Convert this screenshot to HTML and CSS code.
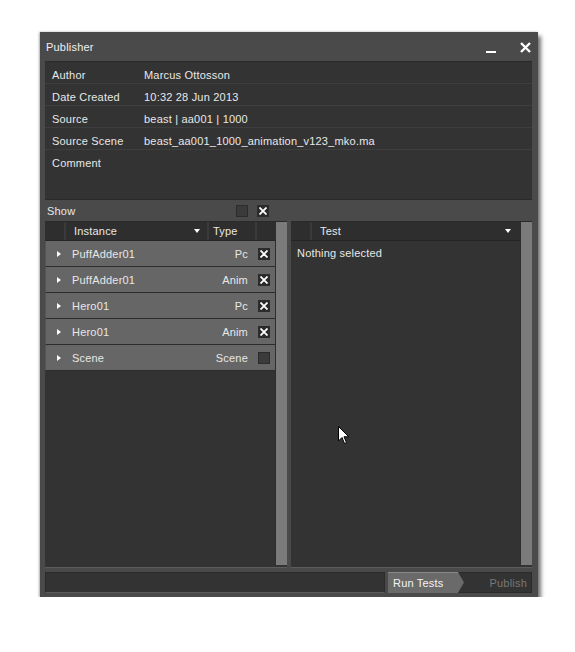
FILE: index.html
```html
<!DOCTYPE html>
<html lang="en">
<head>
  <meta charset="UTF-8">
  <title>Publisher</title>
  <link rel="stylesheet" href="styles.css">
</head>
<body>

  <div class="window">
    <div class="titlebar">
      <span class="title">Publisher</span>
      <span class="minimize"></span>
      <svg class="close" width="11" height="11" viewBox="0 0 11 11"><path d="M1 1 L10 10 M10 1 L1 10" stroke="#fff" stroke-width="2.4"/></svg>
    </div>

    <div class="info">
      <div class="info-row"><span class="label">Author</span><span>Marcus Ottosson</span></div>
      <div class="info-row"><span class="label">Date Created</span><span>10:32 28 Jun 2013</span></div>
      <div class="info-row"><span class="label">Source</span><span>beast | aa001 | 1000</span></div>
      <div class="info-row"><span class="label">Source Scene</span><span>beast_aa001_1000_animation_v123_mko.ma</span></div>
      <div class="info-row comment"><span class="label">Comment</span></div>
    </div>

    <div class="show-bar">
      <span>Show</span>
      <span class="checks">
        <span class="check"></span>
        <span class="check on"><svg width="8" height="8" viewBox="0 0 8 8"><path d="M0.5 0.5 L7.5 7.5 M7.5 0.5 L0.5 7.5" stroke="#fff" stroke-width="1.8"/></svg></span>
      </span>
    </div>

    <div class="panels">
      <div class="panel left">
        <div class="list">
          <div class="head">
            <span class="cell first"></span>
            <span class="cell instance">Instance <svg class="arrow" width="6" height="4" viewBox="0 0 6 4"><path d="M0 0 L6 0 L3 4 Z" fill="#fff"/></svg></span>
            <span class="cell type">Type</span>
            <span class="cell last"></span>
          </div>
          <div class="item"><svg class="tri" width="4" height="6" viewBox="0 0 4 6"><path d="M0 0 L4 3 L0 6 Z" fill="#fff"/></svg><span class="name">PuffAdder01</span><span class="kind">Pc</span><span class="check on"><svg width="8" height="8" viewBox="0 0 8 8"><path d="M0.5 0.5 L7.5 7.5 M7.5 0.5 L0.5 7.5" stroke="#fff" stroke-width="1.8"/></svg></span></div>
          <div class="item"><svg class="tri" width="4" height="6" viewBox="0 0 4 6"><path d="M0 0 L4 3 L0 6 Z" fill="#fff"/></svg><span class="name">PuffAdder01</span><span class="kind">Anim</span><span class="check on"><svg width="8" height="8" viewBox="0 0 8 8"><path d="M0.5 0.5 L7.5 7.5 M7.5 0.5 L0.5 7.5" stroke="#fff" stroke-width="1.8"/></svg></span></div>
          <div class="item"><svg class="tri" width="4" height="6" viewBox="0 0 4 6"><path d="M0 0 L4 3 L0 6 Z" fill="#fff"/></svg><span class="name">Hero01</span><span class="kind">Pc</span><span class="check on"><svg width="8" height="8" viewBox="0 0 8 8"><path d="M0.5 0.5 L7.5 7.5 M7.5 0.5 L0.5 7.5" stroke="#fff" stroke-width="1.8"/></svg></span></div>
          <div class="item"><svg class="tri" width="4" height="6" viewBox="0 0 4 6"><path d="M0 0 L4 3 L0 6 Z" fill="#fff"/></svg><span class="name">Hero01</span><span class="kind">Anim</span><span class="check on"><svg width="8" height="8" viewBox="0 0 8 8"><path d="M0.5 0.5 L7.5 7.5 M7.5 0.5 L0.5 7.5" stroke="#fff" stroke-width="1.8"/></svg></span></div>
          <div class="item"><svg class="tri" width="4" height="6" viewBox="0 0 4 6"><path d="M0 0 L4 3 L0 6 Z" fill="#fff"/></svg><span class="name">Scene</span><span class="kind">Scene</span><span class="check"></span></div>
        </div>
        <div class="scrollbar"></div>
      </div>

      <div class="panel right">
        <div class="list">
          <div class="head">
            <span class="cell first"></span>
            <span class="cell test">Test <svg class="arrow" width="6" height="4" viewBox="0 0 6 4"><path d="M0 0 L6 0 L3 4 Z" fill="#fff"/></svg></span>
          </div>
          <div class="empty">Nothing selected</div>
        </div>
        <div class="scrollbar"></div>
      </div>
    </div>

    <div class="bottom">
      <div class="status"></div>
      <div class="run">Run Tests</div>
      <div class="publish">Publish</div>
    </div>
  </div>

  <svg class="cursor" width="12" height="19" viewBox="0 0 12 19">
    <path d="M0.5 0.5 L0.5 15 L4 11.5 L6.5 17.5 L8.5 16.5 L6 10.8 L10.8 10.8 Z" fill="#fff" stroke="#000" stroke-width="1"/>
  </svg>

</body>
</html>
```

FILE: styles.css
```css
body {
  margin: 0;
  background: #fff;
  font-family: 'Liberation Sans', Arial, sans-serif;
  font-size: 11px;
  letter-spacing: 0.2px;
  color: #e8e8e8;
}

.window {
  margin: 32px 0 0 40px;
  width: 498px;
  height: 565px;
  background: #4a4a4a;
  box-shadow: 3px 4px 4px rgba(0, 0, 0, 0.55), -1px 0 2px rgba(0, 0, 0, 0.3);
  display: flex;
  flex-direction: column;
  box-sizing: border-box;
  padding: 0 6px 4px 5px;
}

.titlebar {
  height: 29px;
  display: flex;
  align-items: center;
  padding-left: 1px;
  padding-top: 1px;
  box-sizing: border-box;
}

.title {
  flex: 1;
  color: #f0f0f0;
}

.minimize {
  width: 10px;
  height: 2px;
  background: #fff;
  margin: 9px 24px 0 0;
}

.close {
  margin-right: 1px;
}

.info {
  background: #333;
  border-top: 1px solid #2a2a2a;
}

.info-row {
  display: flex;
  align-items: center;
  border-bottom: 1px solid #3e3e3e;
  padding: 4px 0 0 7px;
  height: 17px;
}

.info-row .label {
  width: 92px;
}

.info-row.comment {
  height: 42px;
  align-items: flex-start;
  padding-top: 7px;
  border-bottom: none;
}

.show-bar {
  height: 22px;
  display: flex;
  align-items: center;
  padding-left: 2px;
  box-sizing: border-box;
  border-top: 1px solid #2a2a2a;
}

.show-bar > span:first-child {
  flex: 1;
}

.checks {
  display: flex;
  gap: 9px;
  margin-right: 263px;
}

.check {
  width: 12px;
  height: 12px;
  box-sizing: border-box;
  background: #3b3b3b;
  border: 1px solid #2c2c2c;
  display: flex;
  align-items: center;
  justify-content: center;
}

.check.on {
  background: #2a2a2a;
}

.panels {
  flex: 1;
  display: flex;
  gap: 4px;
}

.panel {
  display: flex;
  background: #333;
  border-top: 1px solid #2a2a2a;
  border-bottom: 1px solid #5c5c5c;
}

.panel.left {
  width: 242px;
}

.panel.right {
  flex: 1;
}

.list {
  flex: 1;
  display: flex;
  flex-direction: column;
}

.scrollbar {
  width: 11px;
  background: #7b7b7b;
  border-left: 1px solid #2e2e2e;
  margin-bottom: 2px;
}

.head {
  height: 18px;
  display: flex;
  background: #2e2e2e;
  border-bottom: 1px solid #262626;
}

.cell {
  display: flex;
  align-items: center;
  border-right: 2px solid #3a3a3a;
}

.cell.first {
  width: 19px;
}

.cell.instance {
  width: 126px;
  padding-left: 8px;
  justify-content: space-between;
  padding-right: 7px;
}

.cell.type {
  width: 42px;
  padding-left: 4px;
}

.cell.last {
  flex: 1;
  border-right: none;
}

.cell.test {
  flex: 1;
  padding-left: 8px;
  padding-right: 9px;
  justify-content: space-between;
  border-right: none;
}

.item {
  height: 25px;
  display: flex;
  align-items: center;
  background: #666;
  border-bottom: 1px solid #2c2c2c;
  border-left: 1px solid #555;
  padding-left: 11px;
}

.tri {
  margin-right: 11px;
}

.name {
  flex: 1;
  padding-top: 1px;
}

.kind {
  margin-right: 10px;
}

.item .check {
  margin-right: 5px;
}

.empty {
  padding: 6px 6px;
}

.bottom {
  display: flex;
  height: 21px;
  margin-top: 4px;
}

.status {
  width: 338px;
  background: #333;
  border: 1px solid #2a2a2a;
  border-bottom-color: #5c5c5c;
}

.run {
  width: 76px;
  margin-left: 3px;
  background: #6a6a6a;
  color: #f4f4f4;
  display: flex;
  align-items: center;
  padding-left: 5px;
  box-sizing: border-box;
  clip-path: polygon(0 0, 92% 0, 100% 50%, 92% 100%, 0 100%);
  border-top: 1px solid #888;
}

.publish {
  flex: 1;
  background: #333;
  color: #777;
  display: flex;
  align-items: center;
  justify-content: flex-end;
  padding-right: 4px;
  margin-left: -6px;
  border: 1px solid #2a2a2a;
}

.cursor {
  position: absolute;
  left: 338px;
  top: 426px;
}
```
